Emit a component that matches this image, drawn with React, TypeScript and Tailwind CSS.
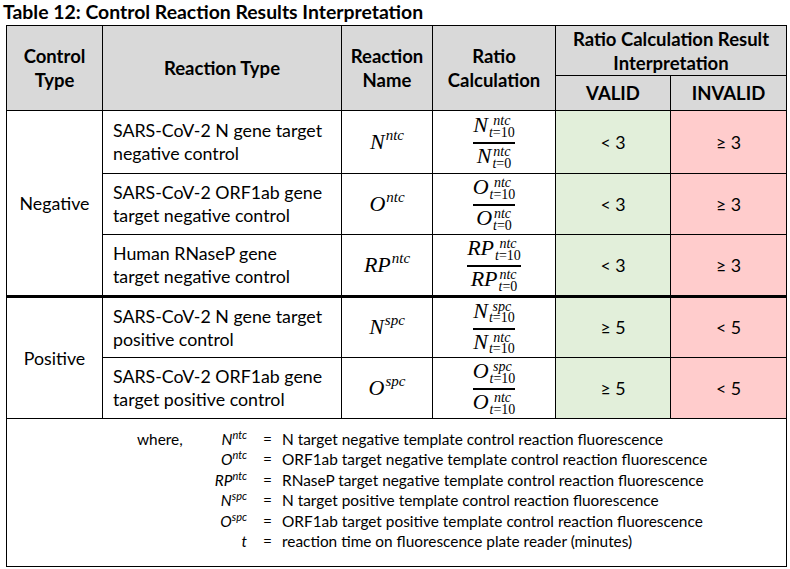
import React from "react";

const sans = "font-['Lato','Open_Sans',sans-serif]";
const serif = "font-['Liberation_Serif','DejaVu_Serif',serif]";

const Var = ({ base, sup }: { base: string; sup: string }) => (
  <span className={`${serif} italic text-[22px] leading-none`}>
    {base}
    <span className="text-[15px] leading-none relative top-[-9px] ml-[1px]">{sup}</span>
  </span>
);

const Term = ({ base, sup, t }: { base: string; sup: string; t: string }) => (
  <span className={`${serif} inline-flex items-end leading-none`}>
    <span className="italic text-[22px] leading-[20px] mb-[3px]">{base}</span>
    <span className="inline-flex flex-col text-[14px] leading-[11.5px] ml-[1px]">
      <span className="italic">{sup}</span>
      <span>
        <span className="italic">t</span>={t}
      </span>
    </span>
  </span>
);

const Frac = ({ base, top, bottom, t2 }: { base: string; top: string; bottom: string; t2: string }) => (
  <span className="inline-flex flex-col items-center align-middle">
    <Term base={base} sup={top} t="10" />
    <span className="h-[2px] w-full bg-black mt-[4px] mb-[2px]" />
    <Term base={base} sup={bottom} t={t2} />
  </span>
);

const rows = [
  { group: "Negative", span: 3, type: ["SARS-CoV-2 N gene target", "negative control"], name: ["N", "ntc"], frac: ["N", "ntc", "ntc", "0"], valid: "< 3", invalid: "≥ 3", h: "h-[63px]" },
  { type: ["SARS-CoV-2 ORF1ab gene", "target negative control"], name: ["O", "ntc"], frac: ["O", "ntc", "ntc", "0"], valid: "< 3", invalid: "≥ 3", h: "h-[61px]" },
  { type: ["Human RNaseP gene", "target negative control"], name: ["RP", "ntc"], frac: ["RP", "ntc", "ntc", "0"], valid: "< 3", invalid: "≥ 3", h: "h-[62px]" },
  { group: "Positive", span: 2, thick: true, type: ["SARS-CoV-2 N gene target", "positive control"], name: ["N", "spc"], frac: ["N", "spc", "ntc", "10"], valid: "≥ 5", invalid: "< 5", h: "h-[61px]" },
  { type: ["SARS-CoV-2 ORF1ab gene", "target positive control"], name: ["O", "spc"], frac: ["O", "spc", "ntc", "10"], valid: "≥ 5", invalid: "< 5", h: "h-[61px]" },
];

const notes: [string, string, string][] = [
  ["N", "ntc", "N target negative template control reaction fluorescence"],
  ["O", "ntc", "ORF1ab target negative template control reaction fluorescence"],
  ["RP", "ntc", "RNaseP target negative template control reaction fluorescence"],
  ["N", "spc", "N target positive template control reaction fluorescence"],
  ["O", "spc", "ORF1ab target positive template control reaction fluorescence"],
  ["t", "", "reaction time on fluorescence plate reader (minutes)"],
];

export default function App() {
  const hd = "border border-black bg-[#d9d9d9] font-bold text-[18.5px] text-center align-middle leading-[24px]";
  const td = "border border-black align-middle";
  return (
    <div className={`w-[790px] h-[569px] bg-white text-black ${sans} overflow-hidden`}>
      <div className="pl-[3px] h-[25px] text-[19.4px] font-bold leading-[24px]">
        Table 12: Control Reaction Results Interpretation
      </div>
      <table className="ml-[6px] w-[780px] table-fixed border-collapse text-[17.8px]">
        <colgroup>
          <col className="w-[96px]" />
          <col className="w-[239px]" />
          <col className="w-[91px]" />
          <col className="w-[123px]" />
          <col className="w-[115px]" />
          <col className="w-[116px]" />
        </colgroup>
        <thead>
          <tr className="h-[50px]">
            <th rowSpan={2} className={hd}>Control<br />Type</th>
            <th rowSpan={2} className={hd}>Reaction Type</th>
            <th rowSpan={2} className={hd}>Reaction<br />Name</th>
            <th rowSpan={2} className={hd}>Ratio<br />Calculation</th>
            <th colSpan={2} className={hd}>Ratio Calculation Result<br />Interpretation</th>
          </tr>
          <tr className="h-[35px]">
            <th className={hd}>VALID</th>
            <th className={hd}>INVALID</th>
          </tr>
        </thead>
        <tbody>
          {rows.map((r, i) => (
            <tr key={i} className={`${r.h} ${r.thick ? "border-t-[3px] border-t-black" : ""}`}>
              {r.group && (
                <td rowSpan={r.span} className={`${td} text-center ${r.thick ? "border-t-[3px]" : ""}`}>
                  {r.group}
                </td>
              )}
              <td className={`${td} pl-[10px] leading-[23px] ${r.thick ? "border-t-[3px]" : ""}`}>
                {r.type[0]}
                <br />
                {r.type[1]}
              </td>
              <td className={`${td} text-center ${r.thick ? "border-t-[3px]" : ""}`}>
                <Var base={r.name[0]} sup={r.name[1]} />
              </td>
              <td className={`${td} text-center leading-none ${r.thick ? "border-t-[3px]" : ""}`}>
                <Frac base={r.frac[0]} top={r.frac[1]} bottom={r.frac[2]} t2={r.frac[3]} />
              </td>
              <td className={`${td} bg-[#e2efda] text-center ${r.thick ? "border-t-[3px]" : ""}`}>{r.valid}</td>
              <td className={`${td} bg-[#ffcccc] text-center ${r.thick ? "border-t-[3px]" : ""}`}>{r.invalid}</td>
            </tr>
          ))}
          <tr className="h-[148px]">
            <td colSpan={6} className="border border-black align-top">
              <div className="pl-[130px] pt-[10px] text-[15.4px] leading-[20.4px] grid grid-cols-[60px_50px_35px_1fr]">
                {notes.map(([b, s, text], i) => (
                  <React.Fragment key={i}>
                    <span>{i === 0 ? "where," : ""}</span>
                    <span className="italic text-right">
                      {b}
                      {s && <span className="text-[11px] leading-[0] relative top-[-6px]">{s}</span>}
                    </span>
                    <span className="pl-[16px]">=</span>
                    <span>{text}</span>
                  </React.Fragment>
                ))}
              </div>
            </td>
          </tr>
        </tbody>
      </table>
    </div>
  );
}
